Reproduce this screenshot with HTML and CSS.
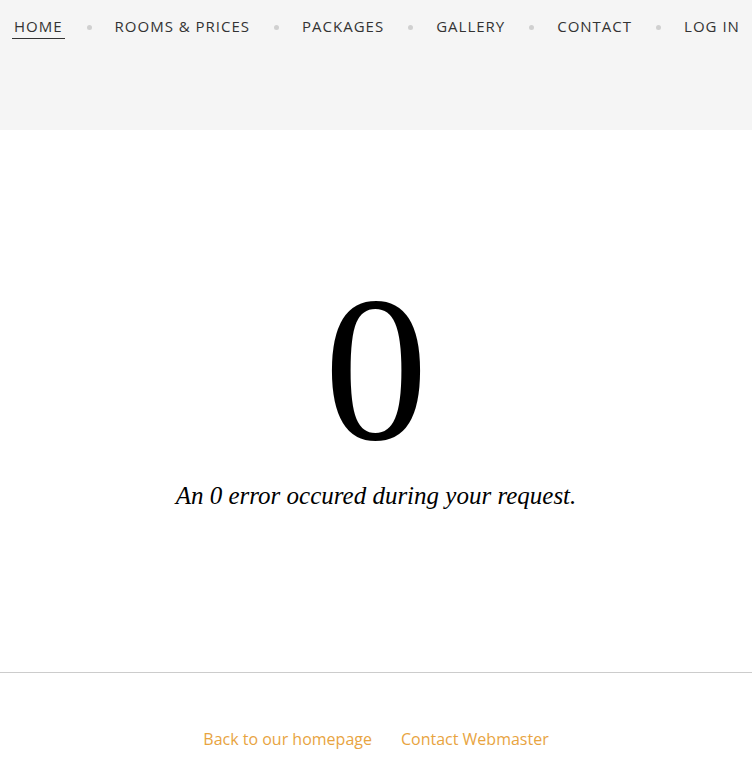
FILE: index.html
```html
<!DOCTYPE html>
<html lang="en">
    <head>
        <meta charset="UTF-8" />
        <meta name="viewport" content="width=device-width, initial-scale=1.0" />
        <title>Error 0</title>
        <link rel="stylesheet" href="styles.css">
    </head>
    <body>
        <!-- 상단 헤더 -->
        <header class="top">
            <nav class="gnb">
                <ul>
                    <li class="on"><a href="#">Home</a></li>
                    <li><a href="#">Rooms &amp; Prices</a></li>
                    <li><a href="#">Packages</a></li>
                    <li><a href="#">Gallery</a></li>
                    <li><a href="#">Contact</a></li>
                    <li><a href="#">Log in</a></li>
                </ul>
            </nav>
        </header>

        <!-- 에러 내용 -->
        <main class="err">
            <h1 class="err-code">0</h1>
            <p class="err-msg">An 0 error occured during your request.</p>
        </main>

        <!-- 하단 링크 -->
        <footer class="foot">
            <a href="#">Back to our homepage</a>
            <a href="#">Contact Webmaster</a>
        </footer>
    </body>
</html>
```

FILE: styles.css
```css
html,
body {
    margin: 0;
    padding: 0;
}
body {
    background: #fff;
    color: #000;
}

ul {
    margin: 0;
    padding: 0;
    list-style: none;
}

/* 헤더 */
.top {
    height: 130px;
    background-color: #f5f5f5;
}

.gnb ul {
    display: flex;
    align-items: center;
    padding: 16px 0 0 12px;
}
.gnb li {
    display: flex;
    align-items: center;
}
/* 메뉴 사이 점 */
.gnb li + li::before {
    content: "";
    width: 5px;
    height: 5px;
    border-radius: 50%;
    background: #d0d0d0;
    margin: 0 21px 0 22px;
}
.gnb a {
    display: block;
    color: #333;
    text-decoration: none;
    text-transform: uppercase;
    font-family: "Open Sans", sans-serif;
    font-size: 15px;
    letter-spacing: 1px;
    line-height: 20px;
    padding: 0 2px 2px;
    border-bottom: 1px solid transparent;
}
.gnb li.on a {
    border-bottom-color: #333;
}

/* 에러 박스 */
.err {
    height: 542px;
    box-sizing: border-box;
    padding-top: 135px;
    display: flex;
    flex-direction: column;
    align-items: center;
    font-family: "Liberation Serif", serif;
}
.err-code {
    margin: 0;
    font-size: 208px;
    font-weight: normal;
    line-height: 1;
}
.err-msg {
    margin: 9px 0 0;
    font-size: 25px;
    font-style: italic;
}

/* 푸터 */
.foot {
    border-top: 1px solid #ccc;
    display: flex;
    justify-content: center;
    gap: 29px;
    padding-top: 55px;
}
.foot a {
    color: #e8a43f;
    text-decoration: none;
    font-family: "Open Sans", sans-serif;
    font-size: 16px;
}
```
